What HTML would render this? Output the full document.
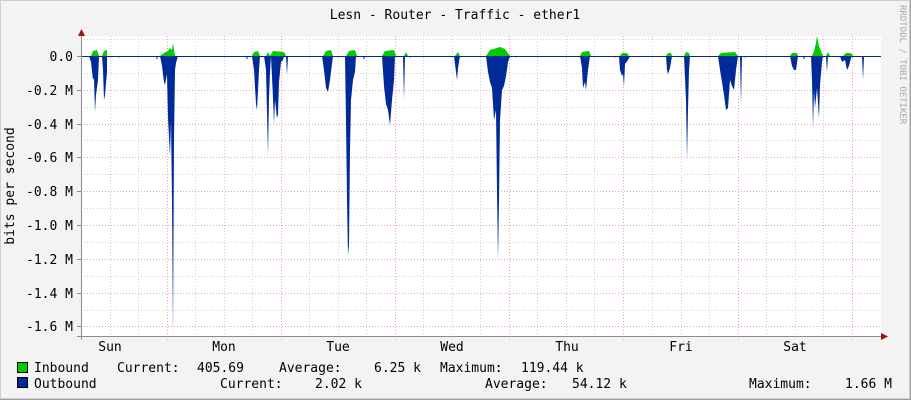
<!DOCTYPE html>
<html><head><meta charset="utf-8"><style>
html,body{margin:0;padding:0;background:#f3f3f3;}
svg{display:block;}
text{font-family:"DejaVu Sans Mono","Liberation Mono",monospace;font-size:13px;fill:#000;}
</style></head><body>
<svg width="911" height="400" xmlns="http://www.w3.org/2000/svg">
<rect x="0" y="0" width="911" height="400" fill="#f3f3f3"/>
<rect x="0.5" y="0.5" width="909" height="398" fill="none" stroke="#cfcfcf"/>
<line x1="0" y1="399.5" x2="911" y2="399.5" stroke="#9e9e9e"/>
<line x1="910.5" y1="0" x2="910.5" y2="400" stroke="#9e9e9e"/>
<rect x="81" y="36" width="800" height="300" fill="#fff"/>
<g stroke="#d0d0d0" stroke-dasharray="1,2" stroke-width="1">
<line x1="81" y1="39.5" x2="881" y2="39.5"/><line x1="81" y1="73.5" x2="881" y2="73.5"/><line x1="81" y1="107.5" x2="881" y2="107.5"/><line x1="81" y1="140.5" x2="881" y2="140.5"/><line x1="81" y1="174.5" x2="881" y2="174.5"/><line x1="81" y1="208.5" x2="881" y2="208.5"/><line x1="81" y1="242.5" x2="881" y2="242.5"/><line x1="81" y1="276.5" x2="881" y2="276.5"/><line x1="81" y1="310.5" x2="881" y2="310.5"/>
<line x1="110.5" y1="36" x2="110.5" y2="336"/><line x1="138.5" y1="36" x2="138.5" y2="336"/><line x1="195.5" y1="36" x2="195.5" y2="336"/><line x1="224.5" y1="36" x2="224.5" y2="336"/><line x1="252.5" y1="36" x2="252.5" y2="336"/><line x1="309.5" y1="36" x2="309.5" y2="336"/><line x1="338.5" y1="36" x2="338.5" y2="336"/><line x1="366.5" y1="36" x2="366.5" y2="336"/><line x1="423.5" y1="36" x2="423.5" y2="336"/><line x1="452.5" y1="36" x2="452.5" y2="336"/><line x1="480.5" y1="36" x2="480.5" y2="336"/><line x1="537.5" y1="36" x2="537.5" y2="336"/><line x1="566.5" y1="36" x2="566.5" y2="336"/><line x1="594.5" y1="36" x2="594.5" y2="336"/><line x1="652.5" y1="36" x2="652.5" y2="336"/><line x1="681.5" y1="36" x2="681.5" y2="336"/><line x1="709.5" y1="36" x2="709.5" y2="336"/><line x1="766.5" y1="36" x2="766.5" y2="336"/><line x1="795.5" y1="36" x2="795.5" y2="336"/><line x1="823.5" y1="36" x2="823.5" y2="336"/>
</g>
<g stroke="#f0a0a0" stroke-dasharray="1,2" stroke-width="1">
<line x1="81" y1="56.5" x2="881" y2="56.5"/><line x1="81" y1="90.5" x2="881" y2="90.5"/><line x1="81" y1="124.5" x2="881" y2="124.5"/><line x1="81" y1="157.5" x2="881" y2="157.5"/><line x1="81" y1="191.5" x2="881" y2="191.5"/><line x1="81" y1="225.5" x2="881" y2="225.5"/><line x1="81" y1="259.5" x2="881" y2="259.5"/><line x1="81" y1="293.5" x2="881" y2="293.5"/><line x1="81" y1="326.5" x2="881" y2="326.5"/>
<line x1="167.5" y1="36" x2="167.5" y2="340"/><line x1="281.5" y1="36" x2="281.5" y2="340"/><line x1="395.5" y1="36" x2="395.5" y2="340"/><line x1="509.5" y1="36" x2="509.5" y2="340"/><line x1="623.5" y1="36" x2="623.5" y2="340"/><line x1="738.5" y1="36" x2="738.5" y2="340"/><line x1="852.5" y1="36" x2="852.5" y2="340"/>
</g>
<!-- inbound -->
<g fill="#00cc00">
<path d="M91,56 L93,51 L97,50 L99,56 Z M102,56 L104,51 L107,50 L107,56 Z"/>
<path d="M160,56 L164,53 L168,51 L170,48 L172,50 L173,43 L175,56 Z"/>
<path d="M252,56 L254,52 L258,51 L260,56 Z M266,56 L268,52 L270,56 Z M270,56 L273,51 L284,52 L286,56 Z"/>
<path d="M323,56 L326,51 L331,50 L333,56 Z M346,56 L349,51 L355,50 L357,56 Z"/>
<path d="M382,56 L385,51 L394,50 L396,56 Z M404,56 L406,52 L408,56 Z"/>
<path d="M455,56 L458,52 L460,56 Z M486,56 L490,50 L500,47 L505,49 L510,56 Z"/>
<path d="M580,56 L582,52 L589,51 L591,56 Z M620,56 L622,53 L627,53 L629,56 Z M666,56 L668,53 L671,53 L672,56 Z M684,56 L686,52 L689,53 L690,56 Z"/>
<path d="M718,56 L721,53 L735,52 L738,56 Z M790,56 L792,53 L797,53 L798,56 Z M812,56 L814,51 L816,43 L817,36 L819,46 L823,56 Z M826,56 L828,52 L830,56 Z M843,56 L846,53 L851,53 L853,56 Z"/>
</g>
<!-- outbound -->
<g fill="#002a97">
<path d="M89,56 L91,62 L93,80 L94,78 L95,112 L96,95 L98,80 L99,56 Z M102,56 L103,70 L104,100 L105,95 L107,72 L107,56 Z M118,56 L119,58 L120,56 Z"/>
<path d="M156,56 L157,60 L158,56 Z M160,56 L162,66 L164,82 L165,85 L167,74 L168,118 L170,156 L171,120 L172,200 L173,336 L174,140 L175,70 L176,63 L178,56 Z"/>
<path d="M246,56 L247,60 L248,56 Z M252,56 L254,70 L256,104 L257,110 L258,90 L259,70 L260,56 Z M264,56 L266,70 L268,155 L269,98 L270,72 L271,56 Z M271,56 L273,98 L274,124 L275,100 L277,118 L278,115 L279,82 L281,62 L283,60 L284,56 Z M286,56 L287,75 L288,56 Z"/>
<path d="M322,56 L324,70 L326,88 L328,92 L330,80 L332,64 L333,56 Z M345,56 L346,120 L347,200 L348,255 L349,245 L350,150 L351,100 L353,80 L355,72 L356,56 Z M363,56 L364,60 L365,56 Z"/>
<path d="M382,56 L384,86 L386,104 L388,110 L390,125 L392,100 L394,80 L395,56 Z M403,56 L404,100 L405,56 Z M409,56 L410,58 L411,56 Z"/>
<path d="M454,56 L456,72 L457,80 L458,68 L460,56 Z M486,56 L488,72 L490,82 L492,88 L494,120 L496,110 L497,190 L498,260 L499,200 L500,120 L502,90 L504,86 L506,76 L508,62 L510,56 Z M515,56 L516,58 L517,56 Z"/>
<path d="M580,56 L582,68 L583,88 L585,82 L586,90 L588,70 L590,56 Z M619,56 L620,70 L622,76 L623,74 L624,86 L625,64 L628,60 L630,56 Z M614,56 L615,58 L616,56 Z M666,56 L667,70 L668,74 L670,68 L672,56 Z M684,56 L686,100 L687,160 L688,110 L689,70 L690,56 Z"/>
<path d="M718,56 L720,70 L722,82 L724,95 L726,110 L728,108 L730,80 L732,86 L734,90 L736,70 L738,56 Z M740,56 L741,104 L742,56 Z M744,56 L745,58 L746,56 Z"/>
<path d="M790,56 L792,66 L794,70 L796,70 L798,56 Z M803,56 L804,60 L805,56 Z M811,56 L812,80 L813,128 L814,90 L815,108 L817,88 L819,118 L820,85 L822,62 L823,56 Z M826,56 L827,72 L828,56 Z M840,56 L842,62 L845,60 L847,70 L849,66 L851,58 L852,56 Z M862,56 L863,80 L864,56 Z"/>
</g>
<line x1="81" y1="56.5" x2="881" y2="56.5" stroke="#002a97" stroke-width="1"/>
<!-- axes -->
<line x1="81.5" y1="30" x2="81.5" y2="340" stroke="#8c8c8c"/>
<line x1="77" y1="336.5" x2="884" y2="336.5" stroke="#8c8c8c"/>
<path d="M78,36 L81.5,29 L85,36 Z" fill="#a01010"/>
<path d="M881,333 L888,336.5 L881,340 Z" fill="#a01010"/>
<g stroke="#8c8c8c">
<line x1="77" y1="56.5" x2="81" y2="56.5"/><line x1="77" y1="90.5" x2="81" y2="90.5"/><line x1="77" y1="124.5" x2="81" y2="124.5"/><line x1="77" y1="157.5" x2="81" y2="157.5"/><line x1="77" y1="191.5" x2="81" y2="191.5"/><line x1="77" y1="225.5" x2="81" y2="225.5"/><line x1="77" y1="259.5" x2="81" y2="259.5"/><line x1="77" y1="293.5" x2="81" y2="293.5"/><line x1="77" y1="326.5" x2="81" y2="326.5"/>
</g>
<g text-anchor="end">
<text x="73" y="61">0.0</text><text x="73" y="95">-0.2 M</text><text x="73" y="129">-0.4 M</text><text x="73" y="162">-0.6 M</text><text x="73" y="196">-0.8 M</text><text x="73" y="230">-1.0 M</text><text x="73" y="264">-1.2 M</text><text x="73" y="298">-1.4 M</text><text x="73" y="331">-1.6 M</text>
</g>
<g text-anchor="middle">
<text x="110" y="351">Sun</text><text x="224" y="351">Mon</text><text x="338" y="351">Tue</text><text x="452" y="351">Wed</text><text x="567" y="351">Thu</text><text x="681" y="351">Fri</text><text x="795" y="351">Sat</text>
<text x="455" y="19">Lesn - Router - Traffic - ether1</text>
<text transform="translate(14,186) rotate(-90)">bits per second</text>
</g>
<text transform="translate(900,5) rotate(90)" style="font-size:9px;fill:#a8a8a8">RRDTOOL / TOBI OETIKER</text>
<rect x="17.5" y="362.5" width="10" height="10" fill="#00cc00" stroke="#000"/>
<rect x="17.5" y="377.5" width="10" height="10" fill="#002a97" stroke="#000"/>
<g xml:space="preserve">
<text x="34" y="372">Inbound</text><text x="117" y="372">Current:</text><text x="197" y="372">405.69</text><text x="279" y="372">Average:</text><text x="374" y="372">6.25 k</text><text x="440" y="372">Maximum:</text><text x="521" y="372">119.44 k</text>
<text x="34" y="388">Outbound</text><text x="220" y="388">Current:</text><text x="315" y="388">2.02 k</text><text x="485" y="388">Average:</text><text x="572" y="388">54.12 k</text><text x="749" y="388">Maximum:</text><text x="845" y="388">1.66 M</text>
</g>
</svg>
</body></html>
